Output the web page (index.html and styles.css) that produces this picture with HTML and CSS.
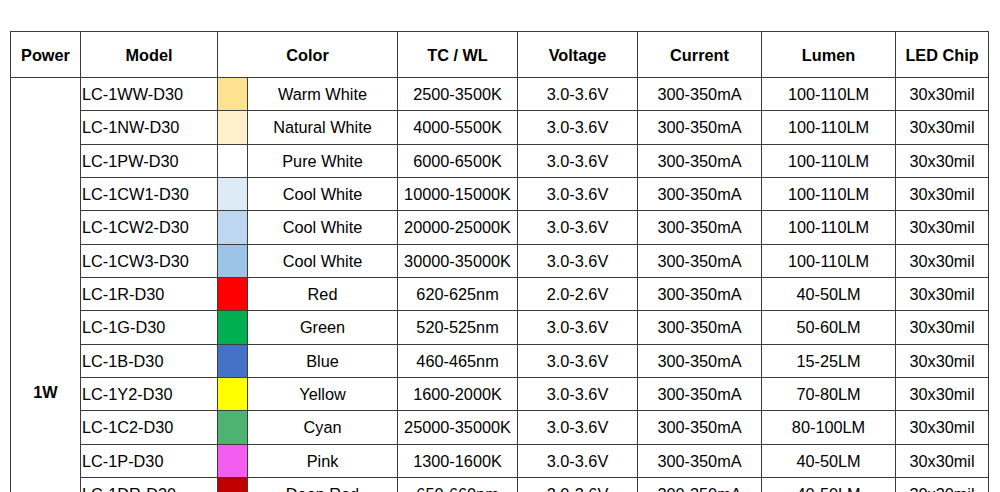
FILE: index.html
```html
<!DOCTYPE html>
<html>
<head>
<meta charset="utf-8">
<link rel="stylesheet" href="styles.css">
</head>
<body>
<table class="spec">
  <colgroup>
    <col class="c-power"><col class="c-model"><col class="c-sw"><col class="c-name"><col class="c-tc"><col class="c-volt"><col class="c-cur"><col class="c-lum"><col class="c-chip">
  </colgroup>
  <thead>
    <tr class="head">
      <th>Power</th><th>Model</th><th colspan="2">Color</th><th>TC / WL</th><th>Voltage</th><th>Current</th><th>Lumen</th><th>LED Chip</th>
    </tr>
  </thead>
  <tbody>
    <tr><td class="power" rowspan="19">1W</td><td class="model">LC-1WW-D30</td><td class="sw ww"></td><td>Warm White</td><td>2500-3500K</td><td>3.0-3.6V</td><td>300-350mA</td><td>100-110LM</td><td>30x30mil</td></tr>
    <tr><td class="model">LC-1NW-D30</td><td class="sw nw"></td><td>Natural White</td><td>4000-5500K</td><td>3.0-3.6V</td><td>300-350mA</td><td>100-110LM</td><td>30x30mil</td></tr>
    <tr><td class="model">LC-1PW-D30</td><td class="sw pw"></td><td>Pure White</td><td>6000-6500K</td><td>3.0-3.6V</td><td>300-350mA</td><td>100-110LM</td><td>30x30mil</td></tr>
    <tr><td class="model">LC-1CW1-D30</td><td class="sw cw1"></td><td>Cool White</td><td>10000-15000K</td><td>3.0-3.6V</td><td>300-350mA</td><td>100-110LM</td><td>30x30mil</td></tr>
    <tr><td class="model">LC-1CW2-D30</td><td class="sw cw2"></td><td>Cool White</td><td>20000-25000K</td><td>3.0-3.6V</td><td>300-350mA</td><td>100-110LM</td><td>30x30mil</td></tr>
    <tr><td class="model">LC-1CW3-D30</td><td class="sw cw3"></td><td>Cool White</td><td>30000-35000K</td><td>3.0-3.6V</td><td>300-350mA</td><td>100-110LM</td><td>30x30mil</td></tr>
    <tr><td class="model">LC-1R-D30</td><td class="sw red"></td><td>Red</td><td>620-625nm</td><td>2.0-2.6V</td><td>300-350mA</td><td>40-50LM</td><td>30x30mil</td></tr>
    <tr><td class="model">LC-1G-D30</td><td class="sw green"></td><td>Green</td><td>520-525nm</td><td>3.0-3.6V</td><td>300-350mA</td><td>50-60LM</td><td>30x30mil</td></tr>
    <tr><td class="model">LC-1B-D30</td><td class="sw blue"></td><td>Blue</td><td>460-465nm</td><td>3.0-3.6V</td><td>300-350mA</td><td>15-25LM</td><td>30x30mil</td></tr>
    <tr><td class="model">LC-1Y2-D30</td><td class="sw yellow"></td><td>Yellow</td><td>1600-2000K</td><td>3.0-3.6V</td><td>300-350mA</td><td>70-80LM</td><td>30x30mil</td></tr>
    <tr><td class="model">LC-1C2-D30</td><td class="sw cyan"></td><td>Cyan</td><td>25000-35000K</td><td>3.0-3.6V</td><td>300-350mA</td><td>80-100LM</td><td>30x30mil</td></tr>
    <tr><td class="model">LC-1P-D30</td><td class="sw pink"></td><td>Pink</td><td>1300-1600K</td><td>3.0-3.6V</td><td>300-350mA</td><td>40-50LM</td><td>30x30mil</td></tr>
    <tr><td class="model">LC-1DR-D30</td><td class="sw dred"></td><td>Deep Red</td><td>650-660nm</td><td>2.0-2.6V</td><td>300-350mA</td><td>40-50LM</td><td>30x30mil</td></tr>
    <tr><td class="model">LC-1O-D30</td><td class="sw orange"></td><td>Orange</td><td>600-610nm</td><td>2.0-2.6V</td><td>300-350mA</td><td>40-50LM</td><td>30x30mil</td></tr>
    <tr><td class="model">LC-1A-D30</td><td class="sw amber"></td><td>Amber</td><td>590-595nm</td><td>2.0-2.6V</td><td>300-350mA</td><td>40-50LM</td><td>30x30mil</td></tr>
    <tr><td class="model">LC-1UV-D30</td><td class="sw uv"></td><td>UV</td><td>395-400nm</td><td>3.0-3.6V</td><td>300-350mA</td><td>—</td><td>30x30mil</td></tr>
    <tr><td class="model">LC-1IR-D30</td><td class="sw ir"></td><td>IR</td><td>850nm</td><td>1.5-1.8V</td><td>300-350mA</td><td>—</td><td>30x30mil</td></tr>
    <tr><td class="model">LC-1IR2-D30</td><td class="sw ir"></td><td>IR</td><td>940nm</td><td>1.5-1.8V</td><td>300-350mA</td><td>—</td><td>30x30mil</td></tr>
    <tr><td class="model">LC-1FS-D30</td><td class="sw fs"></td><td>Full Spectrum</td><td>400-840nm</td><td>3.0-3.6V</td><td>300-350mA</td><td>60-70LM</td><td>30x30mil</td></tr>
  </tbody>
</table>
</body>
</html>
```

FILE: styles.css
```css
html, body {
  margin: 0;
  padding: 0;
  background: #ffffff;
}
body {
  padding: 31px 0 0 10px;
  font-family: "Liberation Sans", Arial, sans-serif;
  font-size: 16.3px;
  color: #000;
}
.spec {
  border-collapse: collapse;
  table-layout: fixed;
  width: 978px;
}
.c-power { width: 70px; }
.c-model { width: 137px; }
.c-sw { width: 30px; }
.c-name { width: 150px; }
.c-tc { width: 120px; }
.c-volt { width: 120px; }
.c-cur { width: 124px; }
.c-lum { width: 134px; }
.c-chip { width: 93px; }

.spec th, .spec td {
  border: 1.5px solid #3c3c3c;
  padding: 0;
  text-align: center;
  vertical-align: middle;
  white-space: nowrap;
  overflow: hidden;
  line-height: 18px;
}
.spec th {
  font-weight: bold;
  height: 45px;
}
.spec tbody tr { height: 33.33px; }
.spec td.model {
  text-align: left;
  padding-left: 1px;
}
.spec td.power {
  font-weight: bold;
  padding-bottom: 4px;
}
.sw.ww { background: #fee290; }
.sw.nw { background: #fff0cc; }
.sw.pw { background: #ffffff; }
.sw.cw1 { background: #ddebf7; }
.sw.cw2 { background: #bdd7ee; }
.sw.cw3 { background: #9dc3e6; }
.sw.red { background: #ff0000; }
.sw.green { background: #00b050; }
.sw.blue { background: #4472c4; }
.sw.yellow { background: #ffff00; }
.sw.cyan { background: #4cb470; }
.sw.pink { background: #f35ef0; }
.sw.dred { background: #c00000; }
.sw.orange { background: #ff8c00; }
.sw.amber { background: #ffc000; }
.sw.uv { background: #7030a0; }
.sw.ir { background: #800000; }
.sw.fs { background: #f2b8d8; }
```
